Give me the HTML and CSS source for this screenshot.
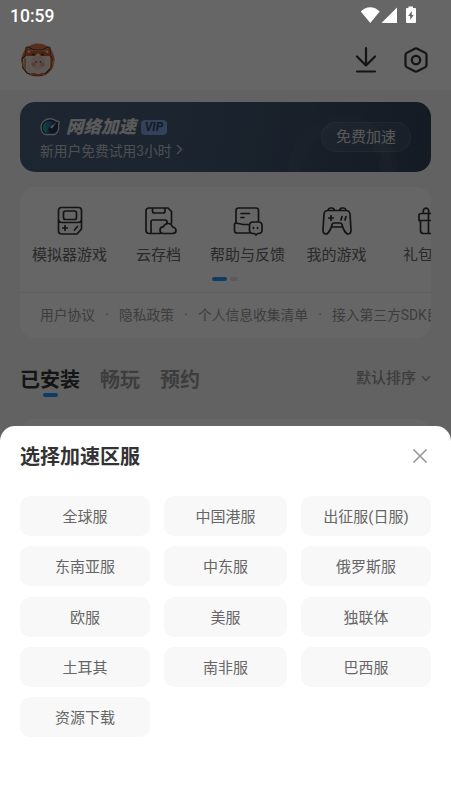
FILE: index.html
```html
<!DOCTYPE html>
<html lang="zh-CN">
<head>
<meta charset="utf-8">
<title>选择加速区服</title>
<link rel="stylesheet" href="styles.css">
</head>
<body>
<div class="screen">
  <header class="top">
    <div class="status">
      <span class="clock">10:59</span>
      <svg class="status-icons" width="58" height="20" viewBox="0 0 58 20" fill="#fff">
        <path d="M.8 6.500C6 .7 14.300.7 19.700 6.500L10.300 18Z"/>
        <path d="M37 2.500V18H21.500Z"/>
        <path fill-rule="evenodd" d="M48.500 1.500h4.500V3H55q1 0 1 1v13q0 1-1 1h-8q-1 0-1-1V4q0-1 1-1h1.500ZM51.800 6l-3.600 5h2v4l3.500-5h-1.900Z"/>
      </svg>
    </div>
    <div class="toolbar">
      <svg class="avatar" width="34" height="34" viewBox="0 0 34 34">
        <circle cx="17" cy="17" r="16.500" fill="#d9714b"/>
        <path d="M5 12 5 5Q6 3 9 5l3 2h10l3-2q3-2 4 0v7l2 4-1 9-5 5-4 2H11l-5-2-4-5-1-9Z" fill="#e6dfd2" stroke="#4a2d20" stroke-width="1.200"/>
        <path d="M4.500 13 5.500 5.500Q7 4 11 8h12q4-4 5.500-2.500l1 7.500H20l-3-3-3 3Z" fill="#c95a2d"/>
        <path d="M6.500 10 7 7l3 2M27.500 10 27 7l-3 2" fill="#ffe1d0"/>
        <circle cx="12.500" cy="11.500" r="1.100" fill="#27221e"/><circle cx="21.500" cy="11.500" r="1.100" fill="#27221e"/>
        <circle cx="17" cy="19.500" r="7" fill="#ecc3b6"/>
        <circle cx="12.500" cy="21.500" r="2" fill="#e59c90"/><circle cx="21.500" cy="21.500" r="2" fill="#e59c90"/>
        <circle cx="15" cy="19" r=".8" fill="#333"/><circle cx="19.500" cy="19" r=".8" fill="#333"/>
        <path d="M4 15v12M30 15v12" stroke="#d9642f" stroke-width="1.300"/>
        <path d="M2 18v5M32 18v5" stroke="#c9b63c" stroke-width="1.300"/>
        <path d="M9 32q4-3 7 0M18 32q4-3 7 0" fill="#d9642f" stroke="#d9642f" stroke-width="1.500"/>
      </svg>
      <div class="actions">
        <svg width="30" height="30" viewBox="0 0 30 30" class="ink head-ink"><path d="M15 3v17.500M6 11.500l9 9 9-9M6 26.500h18"/></svg>
        <svg width="30" height="30" viewBox="0 0 30 30" class="ink head-ink"><path d="M13.700 3.700q1.300-.7 2.600 0l8 4.200q1.200.7 1.200 2v10.200q0 1.300-1.200 2l-8 4.200q-1.300.7-2.600 0l-8-4.200q-1.200-.7-1.200-2V9.900q0-1.300 1.200-2Z"/><circle cx="15" cy="15" r="4.200"/></svg>
      </div>
    </div>
  </header>

  <main class="content">
    <section class="banner">
      <svg class="banner-art" width="150" height="70" viewBox="0 0 150 70"><circle cx="62" cy="68" r="48"/><path d="M105 70q0-20-11-28"/></svg>
      <div class="banner-copy">
        <div class="banner-title">
          <svg width="21" height="18" viewBox="0 0 21 18">
            <defs><linearGradient id="dial" x2="1"><stop stop-color="#2bb388"/><stop offset=".5" stop-color="#2d78b4"/><stop offset="1" stop-color="#203f6c"/></linearGradient></defs>
            <path d="M5 16.500C0 13.500-.2 6.500 4 3 8-.3 13.500.3 16 3q3-.2 3.500 1.800-1.500 1.200-.8 3.500.3 5.700-4 8.200Z" fill="#26364c" stroke="#cbd2d6" stroke-width="1.300"/>
            <path d="M5.500 15C1 11 2.500 5 7.500 3.300q4-1 7 1.200L10 8.500q-3 2-1 5.500Z" fill="url(#dial)"/>
            <path d="m10 9 6-4.500-4 6Z" fill="#c9eee8"/>
          </svg>
          <strong>网络加速</strong><span class="vip">VIP</span>
        </div>
        <div class="banner-sub">新用户免费试用3小时<svg width="7" height="11" viewBox="0 0 7 11"><path d="m1 1 4.500 4.500L1 10"/></svg></div>
      </div>
      <div class="banner-button">免费加速</div>
    </section>

    <section class="card">
      <div class="services">
        <div class="service">
          <svg class="ink" width="32" height="30" viewBox="0 0 32 30"><path d="M7.500 1.500h17q3 0 3 3v18.500l-4.500 5H7.500q-3 0-3-3V4.500q0-3 3-3ZM4.500 13q0 3.500 3.500 3.500h16q3.500 0 3.500-3.500M11.500 5h9q2 0 2 2v4.500q0 2-2 2h-9q-2 0-2-2V7q0-2 2-2ZM11 19.700v4.600M8.700 22h4.600M20.500 24l3-3.500"/></svg>
          <span>模拟器游戏</span>
        </div>
        <div class="service">
          <svg class="ink" width="32" height="30" viewBox="0 0 32 30"><path d="M17.500 27.500H6q-3 0-3-3V5q0-3 3-3h19l3.500 3.500V17M9.500 2v3q0 2 2 2h8.500q2 0 2-2V2M8 27V16q0-2 2-2h12q2 0 2 2v1.500M20.500 27.500q-3.500 0-3.500-3.500 0-3 3.500-3.300 1-3.200 4.500-3.200 3.500 0 4.500 3.500 3.500.5 3.500 3.500 0 3-3.500 3Z"/></svg>
          <span>云存档</span>
        </div>
        <div class="service">
          <svg class="ink" width="32" height="30" viewBox="0 0 32 30"><path d="M4 17V4.500Q4 2 6.500 2H24q2.500 0 2.500 2.500V15M9 7.500h8.500M9 11.500h3M17 27H5q-2.500 0-2.500-2.500v-6q0-1.500 1.500-1.500l7 1.500h5M21 16h5.500q3.500 0 3.500 3.500V24q0 3.500-3.500 3.500h-1l-1.500 1.500-1.500-1.500H21q-3.500 0-3.500-3.500v-4.500Q17.500 16 21 16ZM21.500 21.500v.8M25.500 21.500v.8"/></svg>
          <span>帮助与反馈</span>
        </div>
        <div class="service">
          <svg class="ink" width="32" height="30" viewBox="0 0 32 30"><path d="M7 4.500q-3.500 0-4 3.500L2 24q0 4 3 4 2 0 4-4l1.500-3h11l1.500 3q2 4 4 4 3 0 3-4L29 8q-.5-3.500-4-3.500ZM7 4q.5-2 2.500-2H11q2 0 2.500 2.500h5Q19 2 21 2h1.500Q24.500 2 25 4M10 22l1-3.500q.5-1.500 2-1.500h6q1.500 0 2 1.500l1 3.500M10 9.700v4.600M7.700 12h4.600M20 14l1-3.500M24 14l1-3.500"/></svg>
          <span>我的游戏</span>
        </div>
        <div class="service">
          <svg class="ink" width="32" height="30" viewBox="0 0 32 30"><path d="M11 7.500h15q2 0 2 2v5H9v-5q0-2 2-2ZM10.500 14.500v10q0 3 3 3h10q3 0 3-3v-10M18.500 7.500v20M18.500 7q1-4.500-2.500-4.800-3.500.3-2.500 4.800"/></svg>
          <span>礼包码</span>
        </div>
      </div>
      <div class="pager"><i class="on"></i><i></i></div>
      <div class="links"><span>用户协议</span><b>·</b><span>隐私政策</span><b>·</b><span>个人信息收集清单</span><b>·</b><span>接入第三方SDK目录</span></div>
    </section>

    <nav class="tabs">
      <span class="tab active">已安装</span><span class="tab">畅玩</span><span class="tab">预约</span>
      <span class="sort">默认排序<svg width="10" height="7" viewBox="0 0 10 7"><path d="m1 1 4 4.500L9 1"/></svg></span>
    </nav>
    <section class="games"></section>
  </main>

  <div class="scrim"></div>
  <section class="sheet">
    <div class="sheet-head">
      <h1>选择加速区服</h1>
      <svg width="16" height="16" viewBox="0 0 16 16"><path d="m1.500 1.500 13 13M14.500 1.500l-13 13"/></svg>
    </div>
    <div class="regions">
      <span>全球服</span><span>中国港服</span><span>出征服(日服)</span>
      <span>东南亚服</span><span>中东服</span><span>俄罗斯服</span>
      <span>欧服</span><span>美服</span><span>独联体</span>
      <span>土耳其</span><span>南非服</span><span>巴西服</span>
      <span>资源下载</span>
    </div>
  </section>
</div>
</body>
</html>
```
FILE: styles.css
```css
* { box-sizing: border-box; }
body { margin: 0; font-family: Roboto, "Noto Sans CJK SC", sans-serif; }
svg { display: block; flex: none; overflow: visible; }
.screen { position: relative; width: 451px; height: 802px; overflow: hidden; background: #f5f5f5; }

.top { height: 90px; background: #fff; }
.status { position: relative; z-index: 3; height: 30px; padding: 0 33px 0 10px; display: flex; justify-content: space-between; align-items: flex-start; color: #fff; }
.clock { font-size: 17.500px; font-weight: 500; line-height: 32px; }
.status-icons { margin-top: 5px; }
.toolbar { height: 60px; padding: 0 20px 0 21px; display: flex; align-items: center; justify-content: space-between; }
.actions { display: flex; gap: 20px; }
.ink { fill: none; stroke: #333; stroke-width: 1.700; stroke-linecap: round; stroke-linejoin: round; }
.head-ink { stroke-width: 2.200; }

.content { padding: 12px 20px 0; }
.banner { position: relative; height: 70px; border-radius: 15px; overflow: hidden; padding: 0 20px; display: flex; align-items: center; justify-content: space-between; background: linear-gradient(100deg, #4b5f7c, #445a74 45%, #35435a); color: #e0e0e0; }
.banner-art { position: absolute; right: 0; bottom: 0; fill: none; stroke: rgba(255, 220, 230, .03); stroke-width: 13; }
.banner-title { display: flex; align-items: center; height: 25px; }
.banner-title strong { margin-left: 5px; font-size: 17.500px; line-height: 24px; font-style: italic; font-weight: 900; }
.vip { margin-left: 5px; width: 26px; height: 15px; border-radius: 4px; background: #80a5e2; color: #34445d; font-size: 12px; font-weight: 700; font-style: italic; line-height: 15px; text-align: center; }
.banner-sub { display: flex; align-items: center; height: 20px; font-size: 13.750px; color: #c4c8ce; }
.banner-sub svg { margin-left: 5px; fill: none; stroke: #c4c8ce; stroke-width: 1.400; }
.banner-button { position: relative; width: 90px; height: 30px; border: 1px solid rgba(255, 255, 255, .09); border-radius: 15px; background: rgba(255, 255, 255, .06); font-size: 15px; line-height: 29px; text-align: center; color: #dedede; }

.card { height: 151px; margin-top: 15px; border-radius: 15px; background: #fff; overflow: hidden; }
.services { display: flex; padding: 19px 0 0 5px; }
.service { flex: 0 0 89px; display: flex; flex-direction: column; align-items: center; font-size: 15px; line-height: 22px; color: #666; white-space: nowrap; }
.service span { margin-top: 8px; }
.pager { display: flex; gap: 3px; height: 26px; padding: 11px 0 0 192px; }
.pager i { width: 8px; height: 4px; border-radius: 2px; background: #e5e5e5; }
.pager .on { width: 15px; background: #2196ff; }
.links { display: flex; height: 46px; border-top: 1px solid #ededed; padding-left: 20px; font-size: 13.750px; line-height: 45px; color: #999; white-space: nowrap; }
.links b { width: 24px; text-align: center; font-weight: 400; flex: none; }

.tabs { display: flex; gap: 20px; height: 81px; padding-top: 27px; font-size: 20px; font-weight: 700; line-height: 30px; color: #999; }
.tab.active { color: #333; }
.tab.active::after { content: ""; display: block; width: 15px; height: 4px; border-radius: 2px; margin: -2px auto 0; background: #2196ff; }
.sort { margin-left: auto; display: flex; align-items: center; height: 26px; font-size: 15px; font-weight: 500; }
.sort svg { margin-left: 5px; fill: none; stroke: #999; stroke-width: 1.300; }
.games { height: 120px; border-radius: 15px; background: #fff; }

.scrim { position: absolute; inset: 0; z-index: 2; background: rgba(0, 0, 0, .6); }
.sheet { position: absolute; left: 0; right: 0; bottom: 0; z-index: 4; height: 376px; padding: 0 20px; border-radius: 15px 15px 0 0; background: #fff; }
.sheet-head { display: flex; align-items: center; justify-content: space-between; height: 60px; padding-right: 3px; }
.sheet-head h1 { margin: 2px 0 0; font-size: 20px; line-height: 28px; font-weight: 700; color: #333; }
.sheet-head svg { fill: none; stroke: #999; stroke-width: 1.700; }
.regions { display: grid; grid-template-columns: 130px 123px 130px; column-gap: 14px; row-gap: 10.250px; padding-top: 10px; }
.regions span { height: 40px; border-radius: 10px; background: #f8f8f8; font-size: 15px; line-height: 42px; text-align: center; color: #666; }
```
